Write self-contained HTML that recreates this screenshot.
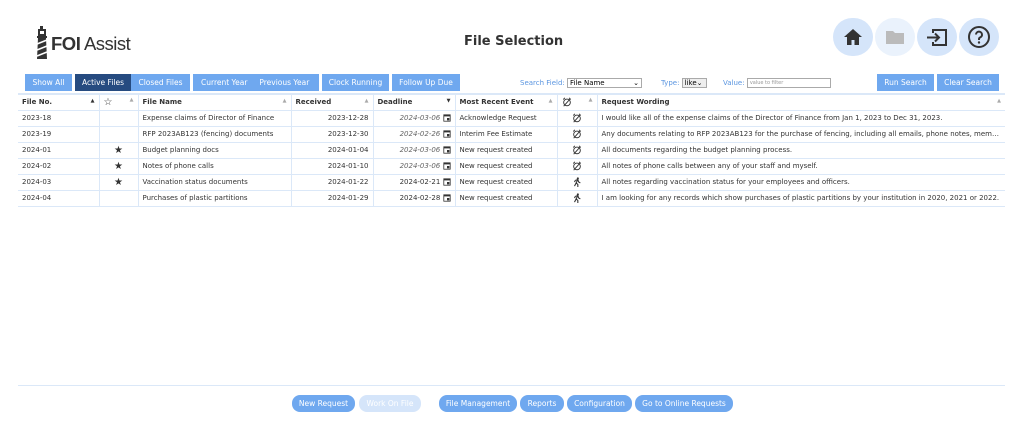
<!DOCTYPE html>
<html><head><meta charset="utf-8"><style>
*{margin:0;padding:0;box-sizing:border-box}
body{width:1024px;height:436px;background:#fff;font-family:"DejaVu Sans","Liberation Sans",sans-serif;color:#333;position:relative;overflow:hidden;font-size:7px}
.a{position:absolute}
.btn{position:absolute;top:74px;height:17px;background:#6fa8ef;color:#fff;font-size:7.5px;line-height:17px;text-align:center}
.bb{position:absolute;top:395px;height:17px;background:#6fa8ef;color:#fff;font-size:7.5px;line-height:17px;text-align:center;border-radius:8px}
.circ{position:absolute;top:18px;width:40px;height:38px;border-radius:20px;background:#d5e5fa}
table{position:absolute;left:18px;top:93px;width:987px;border-collapse:collapse;font-size:7px;table-layout:fixed}
td,th{border:1px solid #dbe8f8;height:16px;padding:0 4px;white-space:nowrap;overflow:hidden;text-overflow:ellipsis;text-align:left}
th{font-weight:bold;color:#333;border-top:2px solid #dbe8f8}
tr td:first-child,tr th:first-child{border-left:none}
tr td:last-child,tr th:last-child{border-right:none}
.r{text-align:right}.c{text-align:center}
.ar{float:right;color:#aaa;font-size:5px}
i{color:#666}
svg{vertical-align:middle}
</style></head><body>
<svg class="a" style="left:35px;top:26px" width="14" height="34" viewBox="0 0 14 34"><rect x="5" y="0" width="3" height="3" fill="#333"/><rect x="3" y="3" width="8" height="7" fill="#333"/><rect x="5" y="5" width="4" height="3" fill="#fff"/><rect x="2" y="10" width="10" height="2" fill="#333"/><path d="M3 12h8l1 21H2z" fill="#333"/><path d="M2 18l10-4M2 24l10-4M2 30l10-4" stroke="#fff" stroke-width="1.5"/></svg>
<div class="a" style="left:51px;top:33px;font-family:'Liberation Sans',sans-serif;font-size:18.5px;color:#333;letter-spacing:-0.5px"><b>FOI</b> Assist</div>
<div class="a" style="left:464px;top:34px;font-size:13px;font-weight:bold;color:#333">File Selection</div>
<div class="circ" style="left:833px"><svg width="40" height="38" viewBox="0 0 40 38"><path d="M20 11l-9 8h3v8h4.5v-5h3v5H26v-8h3z" fill="#333"/></svg></div>
<div class="circ" style="left:875px;background:#eaf2fc"><svg width="40" height="38" viewBox="0 0 40 38"><path d="M11 13h7l2 2h9v11H11z" fill="#bbb"/></svg></div>
<div class="circ" style="left:917px"><svg width="40" height="38" viewBox="0 0 40 38"><path d="M16 15v-3h13v15H16v-3" fill="none" stroke="#333" stroke-width="2"/><path d="M10 19.5h12M18 15.5l4 4-4 4" fill="none" stroke="#333" stroke-width="2"/></svg></div>
<div class="circ" style="left:959px"><svg width="40" height="38" viewBox="0 0 40 38"><circle cx="20" cy="19" r="10" fill="none" stroke="#333" stroke-width="2"/><path d="M17 16.5a3 3 0 1 1 4 3c-1 .5-1 1-1 2.5" fill="none" stroke="#333" stroke-width="2"/><circle cx="20" cy="24.5" r="1.2" fill="#333"/></svg></div>
<div class="btn" style="left:25px;width:47px">Show All</div>
<div class="btn" style="left:75px;width:56px;background:#264b80">Active Files</div>
<div class="btn" style="left:131px;width:59px">Closed Files</div>
<div class="btn" style="left:193px;width:126px;text-align:left;padding-left:8px">Current Year&nbsp;&nbsp;&nbsp;&nbsp;&nbsp;Previous Year</div>
<div class="btn" style="left:322px;width:67px">Clock Running</div>
<div class="btn" style="left:392px;width:68px">Follow Up Due</div>
<div class="a" style="left:520px;top:78px;color:#5a95e0;font-size:7px">Search Field: <span style="display:inline-block;width:75px;height:10px;border:1px solid #aaa;color:#000;vertical-align:middle;line-height:8px;padding-left:2px">File Name<span style="float:right;padding-right:2px">⌄</span></span></div>
<div class="a" style="left:661px;top:78px;color:#5a95e0;font-size:7px">Type: <span style="display:inline-block;width:25px;height:10px;border:1px solid #aaa;background:#eee;color:#000;vertical-align:middle;line-height:8px;padding-left:2px">like⌄</span></div>
<div class="a" style="left:723px;top:78px;color:#5a95e0;font-size:7px">Value: <span style="display:inline-block;width:84px;height:10px;border:1px solid #aaa;color:#999;vertical-align:middle;line-height:8px;padding-left:2px;font-size:5px">value to filter</span></div>
<div class="btn" style="left:877px;width:57px">Run Search</div>
<div class="btn" style="left:937px;width:62px">Clear Search</div>
<svg width="0" height="0" style="position:absolute"><defs>
<symbol id="ck" viewBox="0 0 12 12"><circle cx="6" cy="6.5" r="4" fill="none" stroke="#333" stroke-width="1.1"/><path d="M1.5 3l2-2M10.5 3l-2-2M2 11l8-9" stroke="#333" stroke-width="1.1" fill="none"/></symbol>
<symbol id="rn" viewBox="0 0 12 12"><circle cx="7" cy="1.8" r="1.3" fill="#333"/><path d="M4 4l3-1 1 3 2 1M7 3l-2 4 2 2v3M5 7l-2 4M4 4L3 6" stroke="#333" stroke-width="1.3" fill="none"/></symbol>
<symbol id="cal" viewBox="0 0 10 10"><rect x="1" y="1" width="8" height="8" fill="none" stroke="#333" stroke-width="1"/><rect x="1" y="1" width="8" height="2" fill="#333"/><rect x="5" y="5" width="3" height="3" fill="#333"/></symbol>
</defs></svg>
<table>
<colgroup><col style="width:81px"><col style="width:39px"><col style="width:153px"><col style="width:82px"><col style="width:82px"><col style="width:102px"><col style="width:40px"><col></colgroup>
<tr><th>File No.<span class="ar" style="color:#333">▲</span></th><th style="font-size:10px;font-weight:normal">☆<span class="ar">▲</span></th><th>File Name<span class="ar">▲</span></th><th>Received<span class="ar">▲</span></th><th>Deadline<span class="ar" style="color:#333">▼</span></th><th>Most Recent Event<span class="ar">▲</span></th><th><svg width="10" height="10"><use href="#ck"/></svg><span class="ar">▲</span></th><th>Request Wording<span class="ar">▲</span></th></tr>
<tr><td>2023-18</td><td></td><td>Expense claims of Director of Finance</td><td class="r">2023-12-28</td><td class="r"><i>2024-03-06</i> <svg width="8" height="8"><use href="#cal"/></svg></td><td>Acknowledge Request</td><td class="c"><svg width="10" height="10"><use href="#ck"/></svg></td><td>I would like all of the expense claims of the Director of Finance from Jan 1, 2023 to Dec 31, 2023.</td></tr>
<tr><td>2023-19</td><td></td><td>RFP 2023AB123 (fencing) documents</td><td class="r">2023-12-30</td><td class="r"><i>2024-02-26</i> <svg width="8" height="8"><use href="#cal"/></svg></td><td>Interim Fee Estimate</td><td class="c"><svg width="10" height="10"><use href="#ck"/></svg></td><td>Any documents relating to RFP 2023AB123 for the purchase of fencing, including all emails, phone notes, memoran...</td></tr>
<tr><td>2024-01</td><td class="c" style="font-size:10px">★</td><td>Budget planning docs</td><td class="r">2024-01-04</td><td class="r"><i>2024-03-06</i> <svg width="8" height="8"><use href="#cal"/></svg></td><td>New request created</td><td class="c"><svg width="10" height="10"><use href="#ck"/></svg></td><td>All documents regarding the budget planning process.</td></tr>
<tr><td>2024-02</td><td class="c" style="font-size:10px">★</td><td>Notes of phone calls</td><td class="r">2024-01-10</td><td class="r"><i>2024-03-06</i> <svg width="8" height="8"><use href="#cal"/></svg></td><td>New request created</td><td class="c"><svg width="10" height="10"><use href="#ck"/></svg></td><td>All notes of phone calls between any of your staff and myself.</td></tr>
<tr><td>2024-03</td><td class="c" style="font-size:10px">★</td><td>Vaccination status documents</td><td class="r">2024-01-22</td><td class="r">2024-02-21 <svg width="8" height="8"><use href="#cal"/></svg></td><td>New request created</td><td class="c"><svg width="10" height="10"><use href="#rn"/></svg></td><td>All notes regarding vaccination status for your employees and officers.</td></tr>
<tr><td>2024-04</td><td></td><td>Purchases of plastic partitions</td><td class="r">2024-01-29</td><td class="r">2024-02-28 <svg width="8" height="8"><use href="#cal"/></svg></td><td>New request created</td><td class="c"><svg width="10" height="10"><use href="#rn"/></svg></td><td>I am looking for any records which show purchases of plastic partitions by your institution in 2020, 2021 or 2022.</td></tr>
</table>
<div class="a" style="left:18px;top:385px;width:987px;height:1px;background:#dbe8f8"></div>
<div class="bb" style="left:292px;width:63px">New Request</div>
<div class="bb" style="left:359px;width:62px;background:#d5e5fa">Work On File</div>
<div class="bb" style="left:439px;width:78px">File Management</div>
<div class="bb" style="left:520px;width:44px">Reports</div>
<div class="bb" style="left:567px;width:65px">Configuration</div>
<div class="bb" style="left:635px;width:98px">Go to Online Requests</div>
</body></html>
